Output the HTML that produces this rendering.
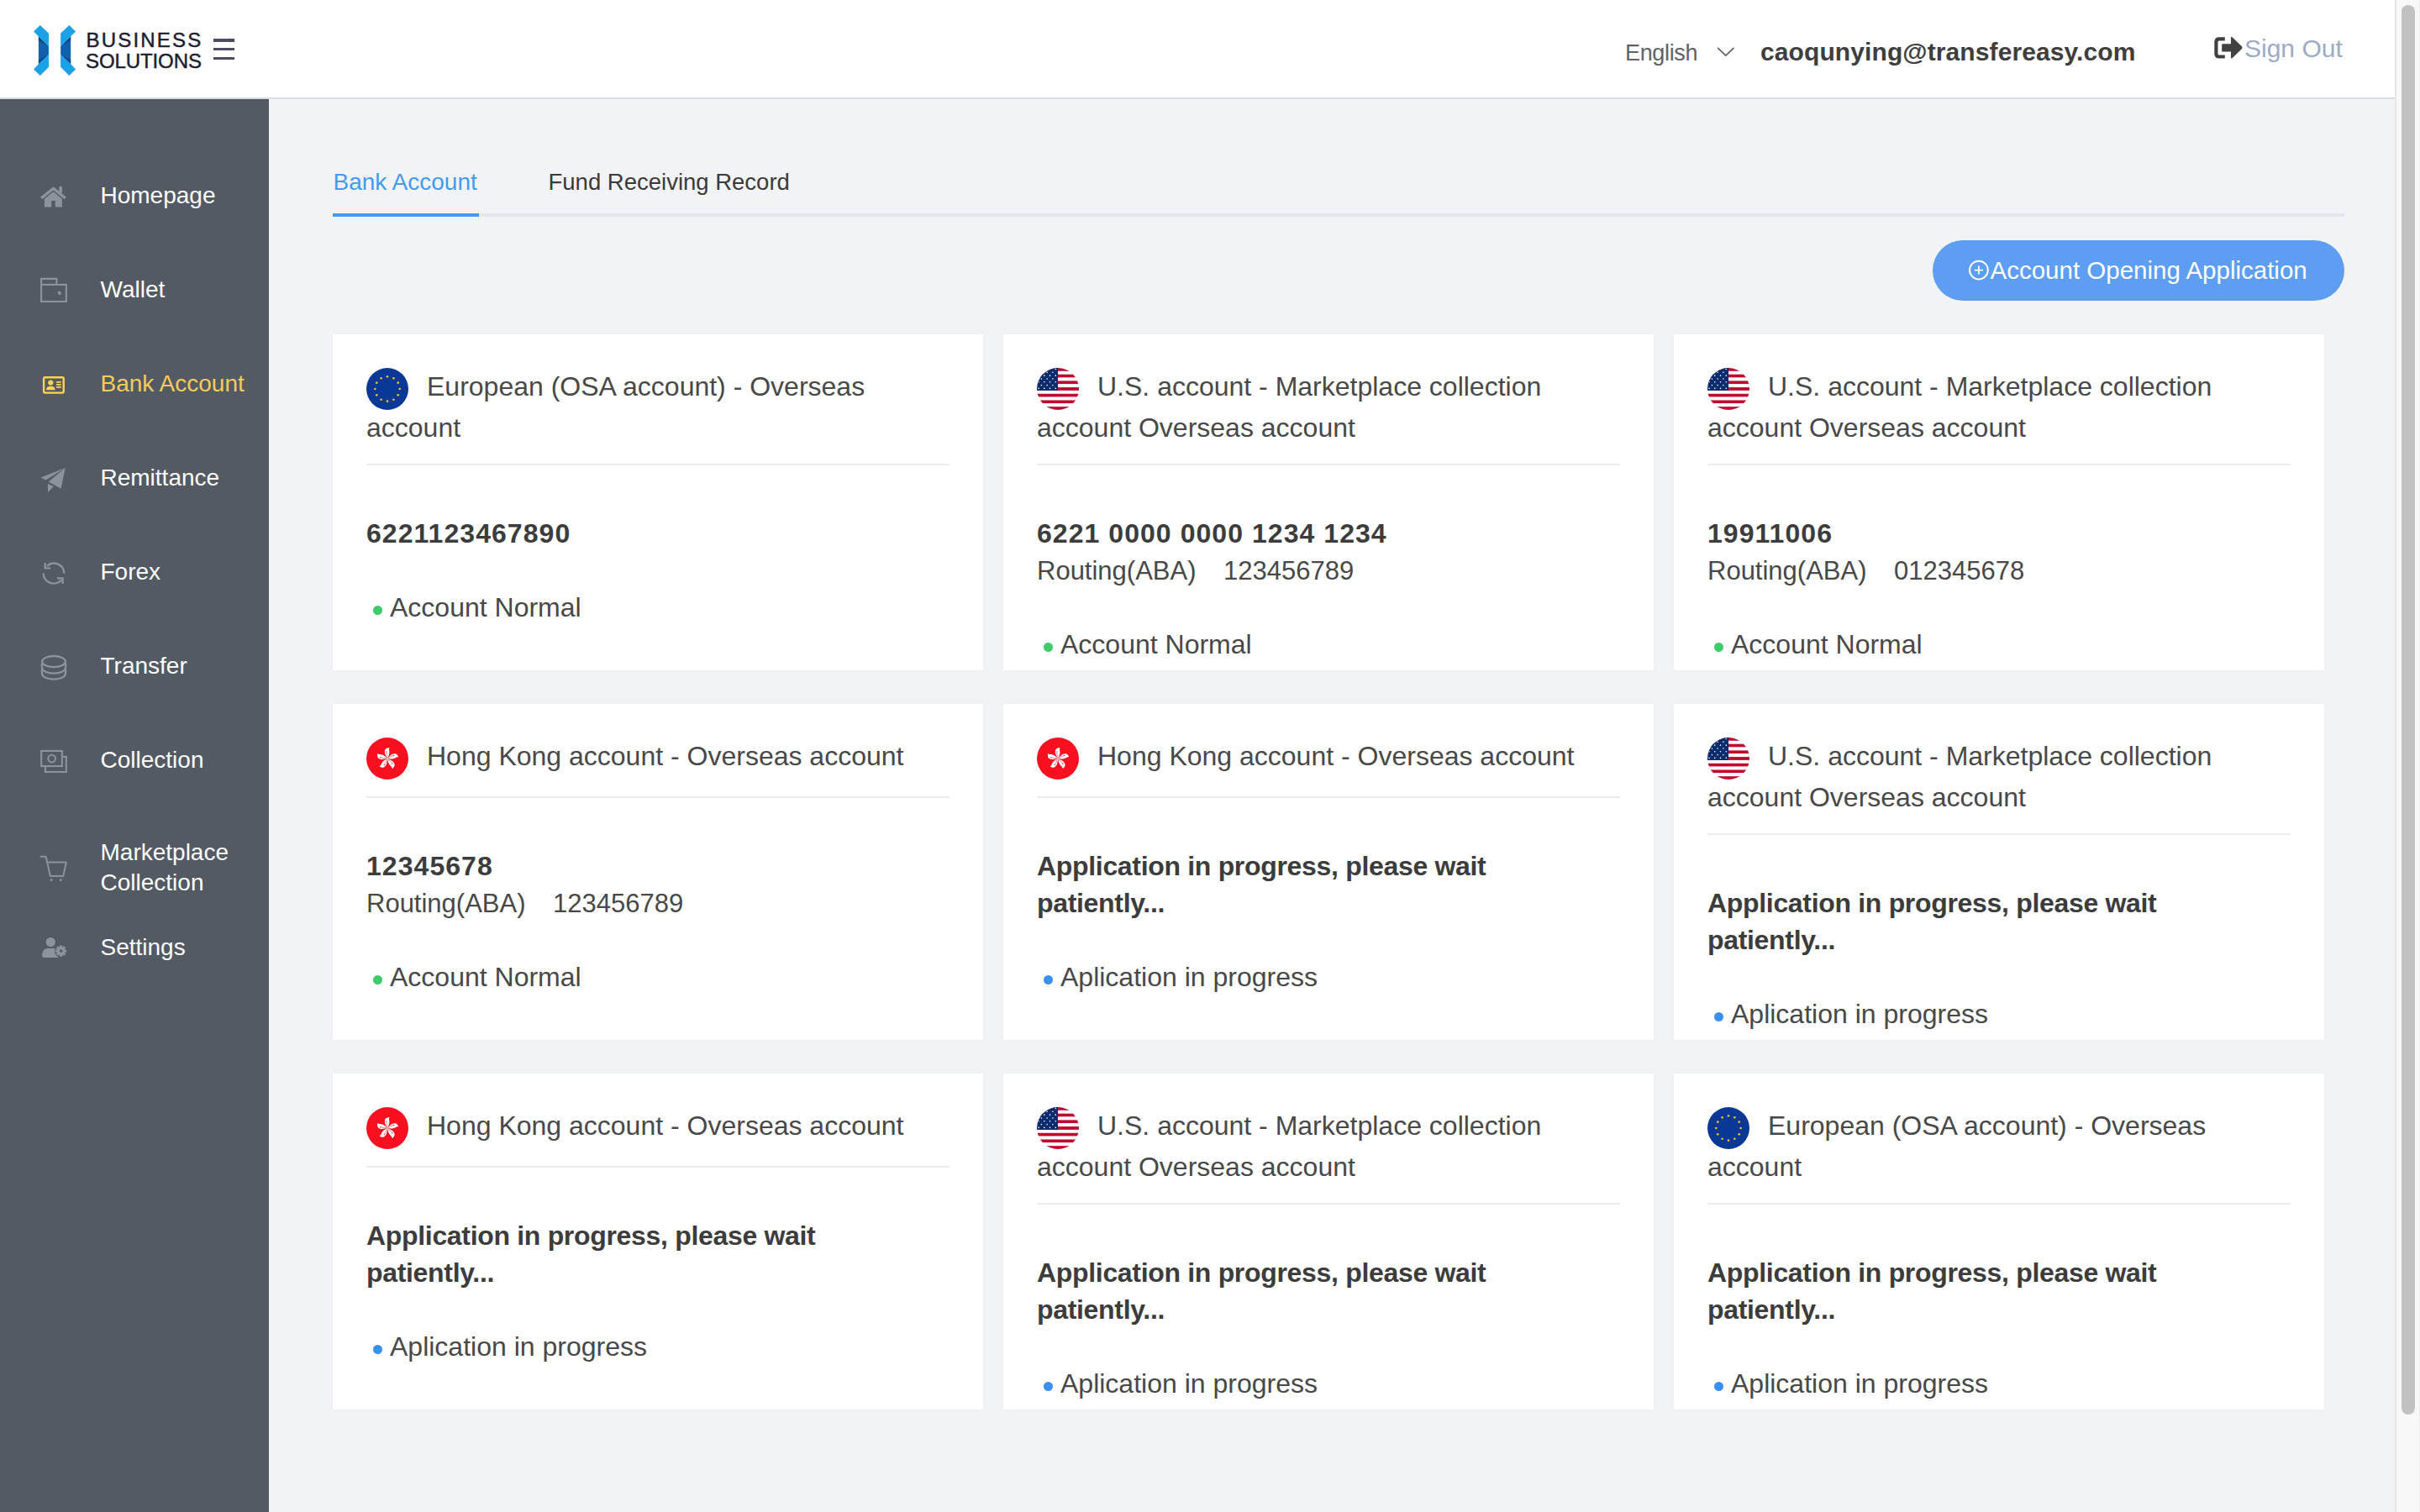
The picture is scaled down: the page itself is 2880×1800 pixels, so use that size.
<!DOCTYPE html>
<html><head><meta charset="utf-8"><title>Bank Account</title>
<style>
html,body{margin:0;padding:0;width:2880px;height:1800px;overflow:hidden;background:#f2f3f7;}
body{position:relative;font-family:"Liberation Sans",sans-serif;}
.abs{position:absolute;}
.t{position:absolute;white-space:nowrap;}
#hdr{position:absolute;left:0;top:0;width:2850px;height:116px;background:#fff;border-bottom:2px solid #d6dde9;}
#side{position:absolute;left:0;top:118px;width:320px;height:1682px;background:#535a63;}
.card{position:absolute;width:774px;height:400px;background:#fff;box-shadow:0 0 6px rgba(0,0,0,0.035);}
</style></head><body>
<div id="hdr"></div>
<svg class="abs" style="left:0;top:0" width="100" height="100" viewBox="0 0 100 100">
<g id="lg">
<polygon points="45.9,43.3 57.95,55.24 57.95,64.69 45.9,76.16" fill="#1160ae"/>
<polygon points="45.9,43.3 45.9,48.2 57.95,55.24" fill="#0b4a88"/>
<polygon points="45.9,76.16 45.9,71.4 57.95,64.69" fill="#0b4a88"/>
<polygon points="40.05,37.47 47.79,29.96 57.95,39.72 57.95,55.24 45.9,43.32" fill="#1ba1e6"/>
<polygon points="40.05,82.46 47.79,89.88 57.95,79.76 57.95,64.69 45.9,76.16" fill="#1ba1e6"/>
</g>
<g transform="translate(130.1,0) scale(-1,1)">
<polygon points="45.9,43.3 57.95,55.24 57.95,64.69 45.9,76.16" fill="#1160ae"/>
<polygon points="45.9,43.3 45.9,48.2 57.95,55.24" fill="#0b4a88"/>
<polygon points="45.9,76.16 45.9,71.4 57.95,64.69" fill="#0b4a88"/>
<polygon points="40.05,37.47 47.79,29.96 57.95,39.72 57.95,55.24 45.9,43.32" fill="#1ba1e6"/>
<polygon points="40.05,82.46 47.79,89.88 57.95,79.76 57.95,64.69 45.9,76.16" fill="#1ba1e6"/>
</g>
</svg>
<div class="t" style="left:102.5px;top:32.68px;font-size:24px;line-height:30px;color:#1d1d2f;font-weight:400;letter-spacing:2.2px;-webkit-text-stroke:0.45px #1d1d2f">BUSINESS</div>
<div class="t" style="left:102px;top:57.68px;font-size:24px;line-height:30px;color:#1d1d2f;font-weight:400;letter-spacing:-0.1px;-webkit-text-stroke:0.45px #1d1d2f">SOLUTIONS</div>
<div class="abs" style="left:253.5px;top:46.4px;width:25px;height:3.2px;background:#4e4a66"></div>
<div class="abs" style="left:253.5px;top:57.2px;width:25px;height:3.2px;background:#4e4a66"></div>
<div class="abs" style="left:253.5px;top:67.8px;width:25px;height:3.2px;background:#4e4a66"></div>
<div class="t" style="left:1934px;top:45.64px;font-size:27px;line-height:34px;color:#606366;font-weight:400;letter-spacing:-0.35px">English</div>
<svg class="abs" style="left:2040px;top:52px" width="28" height="20" viewBox="2040 52 28 20">
<polyline points="2044.6,57.4 2053.8,66.2 2063,57.4" fill="none" stroke="#5e6166" stroke-width="1.7" stroke-linecap="round" stroke-linejoin="round"/></svg>
<div class="t" style="left:2095px;top:43.60px;font-size:30px;line-height:36px;color:#3e3e3e;font-weight:700;letter-spacing:0.1px">caoqunying@transfereasy.com</div>
<svg class="abs" style="left:2630px;top:40px" width="44" height="34" viewBox="2630 40 44 34">
<path d="M2647.8,46.4 H2641 Q2637.4,46.4 2637.4,50 V64 Q2637.4,67.5 2641,67.5 H2647.8" fill="none" stroke="#404040" stroke-width="4.2" stroke-linecap="butt" stroke-linejoin="round"/>
<rect x="2644.2" y="52.3" width="12" height="9.3" rx="1.2" fill="#404040"/>
<path d="M2655.6,45.3 Q2655.2,44.2 2656.4,45 L2667.4,55.8 Q2668.4,56.8 2667.4,57.8 L2656.4,68.6 Q2655.2,69.4 2655.6,68.3 Z" fill="#404040" stroke="#404040" stroke-width="1.2" stroke-linejoin="round"/>
</svg>
<div class="t" style="left:2671px;top:39.60px;font-size:30px;line-height:36px;color:#9eabc4;font-weight:400;">Sign Out</div>
<div class="abs" style="left:2850px;top:0;width:30px;height:1800px;background:#f8f8f8;border-left:2px solid #e6e6e6;border-right:1px solid #eeeeee;box-sizing:border-box"></div>
<div class="abs" style="left:2858px;top:6px;width:16px;height:1678px;background:#c1c1c1;border-radius:8px"></div>
<div id="side"></div>
<div class="t" style="left:119.5px;top:214.90px;font-size:28px;line-height:36px;color:#ffffff;font-weight:400;">Homepage</div>
<div class="t" style="left:119.5px;top:326.90px;font-size:28px;line-height:36px;color:#ffffff;font-weight:400;">Wallet</div>
<div class="t" style="left:119.5px;top:438.90px;font-size:28px;line-height:36px;color:#f5cb5c;font-weight:400;">Bank Account</div>
<div class="t" style="left:119.5px;top:550.90px;font-size:28px;line-height:36px;color:#ffffff;font-weight:400;">Remittance</div>
<div class="t" style="left:119.5px;top:662.90px;font-size:28px;line-height:36px;color:#ffffff;font-weight:400;">Forex</div>
<div class="t" style="left:119.5px;top:774.90px;font-size:28px;line-height:36px;color:#ffffff;font-weight:400;">Transfer</div>
<div class="t" style="left:119.5px;top:886.90px;font-size:28px;line-height:36px;color:#ffffff;font-weight:400;">Collection</div>
<div class="t" style="left:119.5px;top:996.90px;font-size:28px;line-height:36px;color:#ffffff;font-weight:400;">Marketplace</div>
<div class="t" style="left:119.5px;top:1032.90px;font-size:28px;line-height:36px;color:#ffffff;font-weight:400;">Collection</div>
<div class="t" style="left:119.5px;top:1109.90px;font-size:28px;line-height:36px;color:#ffffff;font-weight:400;">Settings</div>
<svg class="abs" style="left:0;top:118px" width="320" height="1100" viewBox="0 118 320 1100">
<!-- home -->
<polygon points="48.1,234.6 63.5,222.2 78.86,234.6 76.7,237.3 63.5,226.6 50.25,237.3" fill="#8e929b"/>
<rect x="70.26" y="222.07" width="3.64" height="7.5" fill="#8e929b"/>
<polygon points="52.9,236.8 63.5,228.35 73.9,236.8 73.9,246.4 65.8,246.4 65.8,239.1 61.2,239.1 61.2,246.4 52.9,246.4" fill="#8e929b"/>
<!-- wallet -->
<rect x="49.1" y="338.9" width="29.75" height="20.1" fill="none" stroke="#8e929b" stroke-width="2.1"/>
<path d="M49.1,338.9 V331.9 H67.4 V338.9" fill="none" stroke="#8e929b" stroke-width="2.1"/>
<circle cx="70.75" cy="348.8" r="2.1" fill="#8e929b"/>
<!-- bank account (active) -->
<rect x="52.1" y="449.2" width="23.6" height="18.4" rx="1.6" fill="none" stroke="#ffd452" stroke-width="2.4"/>
<circle cx="60.3" cy="455.5" r="3.1" fill="#ffd452"/>
<path d="M55,464.2 Q55,459.8 60.3,459.8 Q65.6,459.8 65.6,464.2 Z" fill="#ffd452"/>
<rect x="66.8" y="454" width="6.1" height="1.7" rx="0.8" fill="#ffd452"/>
<rect x="66.8" y="457" width="6.1" height="1.7" rx="0.8" fill="#ffd452"/>
<rect x="66.8" y="460" width="6.1" height="1.7" rx="0.8" fill="#ffd452"/>
<!-- remittance -->
<path d="M48.4,568.5 L77.7,557.1 L54.5,571.6 Z" fill="#8e929b"/>
<path d="M77.7,557.1 L72.6,581.7 L57.7,573.4 Z" fill="#8e929b"/>
<path d="M56.9,575.8 L63.8,579.2 L57,586 Z" fill="#8e929b"/>
<!-- forex -->
<path d="M56.1,673.6 A12.2,12.2 0 0 1 76.3,682.5" fill="none" stroke="#8e929b" stroke-width="2.4"/>
<path d="M51.6,682.5 A12.2,12.2 0 0 0 73.2,690.2" fill="none" stroke="#8e929b" stroke-width="2.4"/>
<path d="M53.7,670 V676.4 H60" fill="none" stroke="#8e929b" stroke-width="2.4"/>
<path d="M68,688.4 H74.6 V695" fill="none" stroke="#8e929b" stroke-width="2.4"/>
<!-- transfer -->
<ellipse cx="64" cy="787.6" rx="13.9" ry="6.6" fill="none" stroke="#8e929b" stroke-width="2.3"/>
<path d="M50.1,789.5 Q49.3,792 50.1,795 A13.9,6.6 0 0 0 77.9,795 Q78.7,792 77.9,789.5" fill="none" stroke="#8e929b" stroke-width="2.3"/>
<path d="M50.1,796.5 Q49.3,799 50.1,802 A13.9,6.6 0 0 0 77.9,802 Q78.7,799 77.9,796.5" fill="none" stroke="#8e929b" stroke-width="2.3"/>
<!-- collection -->
<rect x="49.15" y="893.95" width="24.7" height="18.1" fill="none" stroke="#8e929b" stroke-width="2.1"/>
<path d="M74.9,900.85 H78.8 V918.95 H53.95 V913.1" fill="none" stroke="#8e929b" stroke-width="2.1"/>
<circle cx="61.66" cy="903.1" r="4.4" fill="none" stroke="#8e929b" stroke-width="2.1"/>
<!-- cart -->
<path d="M48.6,1019.8 H54.6 L59.9,1043.1 H75.2 L78.8,1026.6 H56.4" fill="none" stroke="#8e929b" stroke-width="2" stroke-linejoin="round" stroke-linecap="round"/>
<circle cx="61.1" cy="1047.5" r="1.5" fill="#8e929b"/>
<circle cx="72.4" cy="1047.5" r="1.5" fill="#8e929b"/>
<!-- settings -->
<circle cx="60.24" cy="1121.5" r="5.55" fill="#8e929b"/>
<path d="M50.1,1137.5 Q50.1,1129.1 57.5,1129.1 H63.5 Q69.1,1129.1 69.1,1134 V1140 H52.6 Q50.1,1140 50.1,1137.5 Z" fill="#8e929b"/>
<circle cx="72.6" cy="1132.1" r="7.6" fill="#535a63"/>
<g transform="translate(72.6,1132.1)">
<circle r="4.7" fill="#8e929b"/>
<g fill="#8e929b"><rect x="-1.7" y="-6.6" width="3.4" height="13.2" rx="0.5"/><rect x="-1.7" y="-6.6" width="3.4" height="13.2" rx="0.5" transform="rotate(45)"/><rect x="-1.7" y="-6.6" width="3.4" height="13.2" rx="0.5" transform="rotate(90)"/><rect x="-1.7" y="-6.6" width="3.4" height="13.2" rx="0.5" transform="rotate(135)"/></g>
<circle r="1.8" fill="#535a63"/>
</g>
</svg>
<div class="t" style="left:396.5px;top:198.90px;font-size:28px;line-height:36px;color:#409bf6;font-weight:400;">Bank Account</div>
<div class="t" style="left:652.5px;top:199.07px;font-size:27.5px;line-height:36px;color:#3a3a3a;font-weight:400;">Fund Receiving Record</div>
<div class="abs" style="left:396px;top:254px;width:2394px;height:4px;background:#e4e6ee"></div>
<div class="abs" style="left:396px;top:254px;width:174px;height:4px;background:#409bf6"></div>
<div class="abs" style="left:2300px;top:286px;width:490px;height:72px;border-radius:36px;background:#5d9ef2"></div>
<svg class="abs" style="left:2336px;top:302px" width="40" height="40" viewBox="2336 302 40 40">
<circle cx="2354.9" cy="321.6" r="10.9" fill="none" stroke="#fff" stroke-width="2"/>
<path d="M2349.9,321.6 H2359.9 M2354.9,316.5 V326.6" stroke="#fff" stroke-width="1.8"/></svg>
<div class="t" style="left:2368.5px;top:304.18px;font-size:29.5px;line-height:36px;color:#ffffff;font-weight:400;">Account Opening Application</div>
<div class="card" style="left:396px;top:398px"></div>
<svg class="abs" style="left:436px;top:438px" width="50" height="50" viewBox="0 0 50 50"><circle cx="25" cy="25" r="25" fill="#0a3896"/><circle cx="25.00" cy="10.30" r="1.35" fill="#e9bf2e"/><circle cx="32.35" cy="12.27" r="1.35" fill="#e9bf2e"/><circle cx="37.73" cy="17.65" r="1.35" fill="#e9bf2e"/><circle cx="39.70" cy="25.00" r="1.35" fill="#e9bf2e"/><circle cx="37.73" cy="32.35" r="1.35" fill="#e9bf2e"/><circle cx="32.35" cy="37.73" r="1.35" fill="#e9bf2e"/><circle cx="25.00" cy="39.70" r="1.35" fill="#e9bf2e"/><circle cx="17.65" cy="37.73" r="1.35" fill="#e9bf2e"/><circle cx="12.27" cy="32.35" r="1.35" fill="#e9bf2e"/><circle cx="10.30" cy="25.00" r="1.35" fill="#e9bf2e"/><circle cx="12.27" cy="17.65" r="1.35" fill="#e9bf2e"/><circle cx="17.65" cy="12.27" r="1.35" fill="#e9bf2e"/></svg>
<div class="t" style="left:508px;top:440.41px;font-size:32px;line-height:40px;color:#484848;font-weight:400;">European (OSA account) - Overseas</div>
<div class="t" style="left:436px;top:488.91px;font-size:32px;line-height:40px;color:#484848;font-weight:400;">account</div>
<div class="abs" style="left:436px;top:552px;width:694px;height:2px;background:#ebebeb"></div>
<div class="t" style="left:436px;top:615.41px;font-size:32px;line-height:40px;color:#3c3c3c;font-weight:700;letter-spacing:1.05px">6221123467890</div>
<div class="abs" style="left:444.4px;top:721.00px;width:11px;height:11px;border-radius:50%;background:#3ecb6c"></div>
<div class="t" style="left:464px;top:703.41px;font-size:32px;line-height:40px;color:#484848;font-weight:400;">Account Normal</div>
<div class="card" style="left:1194px;top:398px"></div>
<svg class="abs" style="left:1234px;top:438px" width="50" height="50" viewBox="0 0 50 50"><defs><clipPath id="cu"><circle cx="25" cy="25" r="25"/></clipPath></defs><g clip-path="url(#cu)"><rect x="0" y="0.000" width="50" height="3.896" fill="#bf0a30"/><rect x="0" y="3.846" width="50" height="3.896" fill="#ffffff"/><rect x="0" y="7.692" width="50" height="3.896" fill="#bf0a30"/><rect x="0" y="11.538" width="50" height="3.896" fill="#ffffff"/><rect x="0" y="15.385" width="50" height="3.896" fill="#bf0a30"/><rect x="0" y="19.231" width="50" height="3.896" fill="#ffffff"/><rect x="0" y="23.077" width="50" height="3.896" fill="#bf0a30"/><rect x="0" y="26.923" width="50" height="3.896" fill="#ffffff"/><rect x="0" y="30.769" width="50" height="3.896" fill="#bf0a30"/><rect x="0" y="34.615" width="50" height="3.896" fill="#ffffff"/><rect x="0" y="38.462" width="50" height="3.896" fill="#bf0a30"/><rect x="0" y="42.308" width="50" height="3.896" fill="#ffffff"/><rect x="0" y="46.154" width="50" height="3.896" fill="#bf0a30"/><rect x="0" y="0" width="25" height="26.923" fill="#0a2c6e"/><circle cx="2.00" cy="1.50" r="0.8" fill="#fff"/><circle cx="8.75" cy="1.50" r="0.8" fill="#fff"/><circle cx="15.50" cy="1.50" r="0.8" fill="#fff"/><circle cx="22.25" cy="1.50" r="0.8" fill="#fff"/><circle cx="5.40" cy="5.32" r="0.8" fill="#fff"/><circle cx="12.10" cy="5.32" r="0.8" fill="#fff"/><circle cx="18.90" cy="5.32" r="0.8" fill="#fff"/><circle cx="2.00" cy="9.14" r="0.8" fill="#fff"/><circle cx="8.75" cy="9.14" r="0.8" fill="#fff"/><circle cx="15.50" cy="9.14" r="0.8" fill="#fff"/><circle cx="22.25" cy="9.14" r="0.8" fill="#fff"/><circle cx="5.40" cy="12.96" r="0.8" fill="#fff"/><circle cx="12.10" cy="12.96" r="0.8" fill="#fff"/><circle cx="18.90" cy="12.96" r="0.8" fill="#fff"/><circle cx="2.00" cy="16.78" r="0.8" fill="#fff"/><circle cx="8.75" cy="16.78" r="0.8" fill="#fff"/><circle cx="15.50" cy="16.78" r="0.8" fill="#fff"/><circle cx="22.25" cy="16.78" r="0.8" fill="#fff"/><circle cx="5.40" cy="20.60" r="0.8" fill="#fff"/><circle cx="12.10" cy="20.60" r="0.8" fill="#fff"/><circle cx="18.90" cy="20.60" r="0.8" fill="#fff"/><circle cx="2.00" cy="24.42" r="0.8" fill="#fff"/><circle cx="8.75" cy="24.42" r="0.8" fill="#fff"/><circle cx="15.50" cy="24.42" r="0.8" fill="#fff"/><circle cx="22.25" cy="24.42" r="0.8" fill="#fff"/></g></svg>
<div class="t" style="left:1306px;top:440.41px;font-size:32px;line-height:40px;color:#484848;font-weight:400;">U.S. account - Marketplace collection</div>
<div class="t" style="left:1234px;top:488.91px;font-size:32px;line-height:40px;color:#484848;font-weight:400;">account Overseas account</div>
<div class="abs" style="left:1234px;top:552px;width:694px;height:2px;background:#ebebeb"></div>
<div class="t" style="left:1234px;top:615.41px;font-size:32px;line-height:40px;color:#3c3c3c;font-weight:700;letter-spacing:1.05px">6221 0000 0000 1234 1234</div>
<div class="t" style="left:1234px;top:659.76px;font-size:31px;line-height:40px;color:#484848;font-weight:400;">Routing(ABA)</div>
<div class="t" style="left:1456px;top:659.76px;font-size:31px;line-height:40px;color:#484848;font-weight:400;">123456789</div>
<div class="abs" style="left:1242.4px;top:765.00px;width:11px;height:11px;border-radius:50%;background:#3ecb6c"></div>
<div class="t" style="left:1262px;top:747.41px;font-size:32px;line-height:40px;color:#484848;font-weight:400;">Account Normal</div>
<div class="card" style="left:1992px;top:398px"></div>
<svg class="abs" style="left:2032px;top:438px" width="50" height="50" viewBox="0 0 50 50"><defs><clipPath id="cu"><circle cx="25" cy="25" r="25"/></clipPath></defs><g clip-path="url(#cu)"><rect x="0" y="0.000" width="50" height="3.896" fill="#bf0a30"/><rect x="0" y="3.846" width="50" height="3.896" fill="#ffffff"/><rect x="0" y="7.692" width="50" height="3.896" fill="#bf0a30"/><rect x="0" y="11.538" width="50" height="3.896" fill="#ffffff"/><rect x="0" y="15.385" width="50" height="3.896" fill="#bf0a30"/><rect x="0" y="19.231" width="50" height="3.896" fill="#ffffff"/><rect x="0" y="23.077" width="50" height="3.896" fill="#bf0a30"/><rect x="0" y="26.923" width="50" height="3.896" fill="#ffffff"/><rect x="0" y="30.769" width="50" height="3.896" fill="#bf0a30"/><rect x="0" y="34.615" width="50" height="3.896" fill="#ffffff"/><rect x="0" y="38.462" width="50" height="3.896" fill="#bf0a30"/><rect x="0" y="42.308" width="50" height="3.896" fill="#ffffff"/><rect x="0" y="46.154" width="50" height="3.896" fill="#bf0a30"/><rect x="0" y="0" width="25" height="26.923" fill="#0a2c6e"/><circle cx="2.00" cy="1.50" r="0.8" fill="#fff"/><circle cx="8.75" cy="1.50" r="0.8" fill="#fff"/><circle cx="15.50" cy="1.50" r="0.8" fill="#fff"/><circle cx="22.25" cy="1.50" r="0.8" fill="#fff"/><circle cx="5.40" cy="5.32" r="0.8" fill="#fff"/><circle cx="12.10" cy="5.32" r="0.8" fill="#fff"/><circle cx="18.90" cy="5.32" r="0.8" fill="#fff"/><circle cx="2.00" cy="9.14" r="0.8" fill="#fff"/><circle cx="8.75" cy="9.14" r="0.8" fill="#fff"/><circle cx="15.50" cy="9.14" r="0.8" fill="#fff"/><circle cx="22.25" cy="9.14" r="0.8" fill="#fff"/><circle cx="5.40" cy="12.96" r="0.8" fill="#fff"/><circle cx="12.10" cy="12.96" r="0.8" fill="#fff"/><circle cx="18.90" cy="12.96" r="0.8" fill="#fff"/><circle cx="2.00" cy="16.78" r="0.8" fill="#fff"/><circle cx="8.75" cy="16.78" r="0.8" fill="#fff"/><circle cx="15.50" cy="16.78" r="0.8" fill="#fff"/><circle cx="22.25" cy="16.78" r="0.8" fill="#fff"/><circle cx="5.40" cy="20.60" r="0.8" fill="#fff"/><circle cx="12.10" cy="20.60" r="0.8" fill="#fff"/><circle cx="18.90" cy="20.60" r="0.8" fill="#fff"/><circle cx="2.00" cy="24.42" r="0.8" fill="#fff"/><circle cx="8.75" cy="24.42" r="0.8" fill="#fff"/><circle cx="15.50" cy="24.42" r="0.8" fill="#fff"/><circle cx="22.25" cy="24.42" r="0.8" fill="#fff"/></g></svg>
<div class="t" style="left:2104px;top:440.41px;font-size:32px;line-height:40px;color:#484848;font-weight:400;">U.S. account - Marketplace collection</div>
<div class="t" style="left:2032px;top:488.91px;font-size:32px;line-height:40px;color:#484848;font-weight:400;">account Overseas account</div>
<div class="abs" style="left:2032px;top:552px;width:694px;height:2px;background:#ebebeb"></div>
<div class="t" style="left:2032px;top:615.41px;font-size:32px;line-height:40px;color:#3c3c3c;font-weight:700;letter-spacing:1.05px">19911006</div>
<div class="t" style="left:2032px;top:659.76px;font-size:31px;line-height:40px;color:#484848;font-weight:400;">Routing(ABA)</div>
<div class="t" style="left:2254px;top:659.76px;font-size:31px;line-height:40px;color:#484848;font-weight:400;">012345678</div>
<div class="abs" style="left:2040.4px;top:765.00px;width:11px;height:11px;border-radius:50%;background:#3ecb6c"></div>
<div class="t" style="left:2060px;top:747.41px;font-size:32px;line-height:40px;color:#484848;font-weight:400;">Account Normal</div>
<div class="card" style="left:396px;top:838px"></div>
<svg class="abs" style="left:436px;top:878px" width="50" height="50" viewBox="0 0 50 50"><circle cx="25" cy="25" r="25" fill="#f90f1f"/><g transform="translate(25.1,25.1)"><g transform="rotate(0)"><path d="M0,0 C-1.5,-3 -4.6,-6.5 -2.6,-11 C-1.2,-12.8 1.2,-13.2 2.6,-12.8 C1.6,-11.8 1.8,-10.6 2.2,-9.4 C2.8,-6.2 1.6,-3 0,0 Z" fill="#fff"/><path d="M0.2,-1.2 Q-1.6,-4.6 -1.3,-8.2" fill="none" stroke="#f90f1f" stroke-width="0.45"/><circle cx="-1.3" cy="-8.3" r="0.65" fill="#f90f1f"/></g><g transform="rotate(72)"><path d="M0,0 C-1.5,-3 -4.6,-6.5 -2.6,-11 C-1.2,-12.8 1.2,-13.2 2.6,-12.8 C1.6,-11.8 1.8,-10.6 2.2,-9.4 C2.8,-6.2 1.6,-3 0,0 Z" fill="#fff"/><path d="M0.2,-1.2 Q-1.6,-4.6 -1.3,-8.2" fill="none" stroke="#f90f1f" stroke-width="0.45"/><circle cx="-1.3" cy="-8.3" r="0.65" fill="#f90f1f"/></g><g transform="rotate(144)"><path d="M0,0 C-1.5,-3 -4.6,-6.5 -2.6,-11 C-1.2,-12.8 1.2,-13.2 2.6,-12.8 C1.6,-11.8 1.8,-10.6 2.2,-9.4 C2.8,-6.2 1.6,-3 0,0 Z" fill="#fff"/><path d="M0.2,-1.2 Q-1.6,-4.6 -1.3,-8.2" fill="none" stroke="#f90f1f" stroke-width="0.45"/><circle cx="-1.3" cy="-8.3" r="0.65" fill="#f90f1f"/></g><g transform="rotate(216)"><path d="M0,0 C-1.5,-3 -4.6,-6.5 -2.6,-11 C-1.2,-12.8 1.2,-13.2 2.6,-12.8 C1.6,-11.8 1.8,-10.6 2.2,-9.4 C2.8,-6.2 1.6,-3 0,0 Z" fill="#fff"/><path d="M0.2,-1.2 Q-1.6,-4.6 -1.3,-8.2" fill="none" stroke="#f90f1f" stroke-width="0.45"/><circle cx="-1.3" cy="-8.3" r="0.65" fill="#f90f1f"/></g><g transform="rotate(288)"><path d="M0,0 C-1.5,-3 -4.6,-6.5 -2.6,-11 C-1.2,-12.8 1.2,-13.2 2.6,-12.8 C1.6,-11.8 1.8,-10.6 2.2,-9.4 C2.8,-6.2 1.6,-3 0,0 Z" fill="#fff"/><path d="M0.2,-1.2 Q-1.6,-4.6 -1.3,-8.2" fill="none" stroke="#f90f1f" stroke-width="0.45"/><circle cx="-1.3" cy="-8.3" r="0.65" fill="#f90f1f"/></g></g></svg>
<div class="t" style="left:508px;top:880.41px;font-size:32px;line-height:40px;color:#484848;font-weight:400;">Hong Kong account - Overseas account</div>
<div class="abs" style="left:436px;top:948px;width:694px;height:2px;background:#ebebeb"></div>
<div class="t" style="left:436px;top:1011.41px;font-size:32px;line-height:40px;color:#3c3c3c;font-weight:700;letter-spacing:1.05px">12345678</div>
<div class="t" style="left:436px;top:1055.76px;font-size:31px;line-height:40px;color:#484848;font-weight:400;">Routing(ABA)</div>
<div class="t" style="left:658px;top:1055.76px;font-size:31px;line-height:40px;color:#484848;font-weight:400;">123456789</div>
<div class="abs" style="left:444.4px;top:1161.00px;width:11px;height:11px;border-radius:50%;background:#3ecb6c"></div>
<div class="t" style="left:464px;top:1143.41px;font-size:32px;line-height:40px;color:#484848;font-weight:400;">Account Normal</div>
<div class="card" style="left:1194px;top:838px"></div>
<svg class="abs" style="left:1234px;top:878px" width="50" height="50" viewBox="0 0 50 50"><circle cx="25" cy="25" r="25" fill="#f90f1f"/><g transform="translate(25.1,25.1)"><g transform="rotate(0)"><path d="M0,0 C-1.5,-3 -4.6,-6.5 -2.6,-11 C-1.2,-12.8 1.2,-13.2 2.6,-12.8 C1.6,-11.8 1.8,-10.6 2.2,-9.4 C2.8,-6.2 1.6,-3 0,0 Z" fill="#fff"/><path d="M0.2,-1.2 Q-1.6,-4.6 -1.3,-8.2" fill="none" stroke="#f90f1f" stroke-width="0.45"/><circle cx="-1.3" cy="-8.3" r="0.65" fill="#f90f1f"/></g><g transform="rotate(72)"><path d="M0,0 C-1.5,-3 -4.6,-6.5 -2.6,-11 C-1.2,-12.8 1.2,-13.2 2.6,-12.8 C1.6,-11.8 1.8,-10.6 2.2,-9.4 C2.8,-6.2 1.6,-3 0,0 Z" fill="#fff"/><path d="M0.2,-1.2 Q-1.6,-4.6 -1.3,-8.2" fill="none" stroke="#f90f1f" stroke-width="0.45"/><circle cx="-1.3" cy="-8.3" r="0.65" fill="#f90f1f"/></g><g transform="rotate(144)"><path d="M0,0 C-1.5,-3 -4.6,-6.5 -2.6,-11 C-1.2,-12.8 1.2,-13.2 2.6,-12.8 C1.6,-11.8 1.8,-10.6 2.2,-9.4 C2.8,-6.2 1.6,-3 0,0 Z" fill="#fff"/><path d="M0.2,-1.2 Q-1.6,-4.6 -1.3,-8.2" fill="none" stroke="#f90f1f" stroke-width="0.45"/><circle cx="-1.3" cy="-8.3" r="0.65" fill="#f90f1f"/></g><g transform="rotate(216)"><path d="M0,0 C-1.5,-3 -4.6,-6.5 -2.6,-11 C-1.2,-12.8 1.2,-13.2 2.6,-12.8 C1.6,-11.8 1.8,-10.6 2.2,-9.4 C2.8,-6.2 1.6,-3 0,0 Z" fill="#fff"/><path d="M0.2,-1.2 Q-1.6,-4.6 -1.3,-8.2" fill="none" stroke="#f90f1f" stroke-width="0.45"/><circle cx="-1.3" cy="-8.3" r="0.65" fill="#f90f1f"/></g><g transform="rotate(288)"><path d="M0,0 C-1.5,-3 -4.6,-6.5 -2.6,-11 C-1.2,-12.8 1.2,-13.2 2.6,-12.8 C1.6,-11.8 1.8,-10.6 2.2,-9.4 C2.8,-6.2 1.6,-3 0,0 Z" fill="#fff"/><path d="M0.2,-1.2 Q-1.6,-4.6 -1.3,-8.2" fill="none" stroke="#f90f1f" stroke-width="0.45"/><circle cx="-1.3" cy="-8.3" r="0.65" fill="#f90f1f"/></g></g></svg>
<div class="t" style="left:1306px;top:880.41px;font-size:32px;line-height:40px;color:#484848;font-weight:400;">Hong Kong account - Overseas account</div>
<div class="abs" style="left:1234px;top:948px;width:694px;height:2px;background:#ebebeb"></div>
<div class="t" style="left:1234px;top:1011.41px;font-size:32px;line-height:40px;color:#3c3c3c;font-weight:700;letter-spacing:-0.32px">Application in progress, please wait</div>
<div class="t" style="left:1234px;top:1055.41px;font-size:32px;line-height:40px;color:#3c3c3c;font-weight:700;letter-spacing:-0.32px">patiently...</div>
<div class="abs" style="left:1242.4px;top:1161.00px;width:11px;height:11px;border-radius:50%;background:#3b8ff3"></div>
<div class="t" style="left:1262px;top:1143.41px;font-size:32px;line-height:40px;color:#484848;font-weight:400;">Aplication in progress</div>
<div class="card" style="left:1992px;top:838px"></div>
<svg class="abs" style="left:2032px;top:878px" width="50" height="50" viewBox="0 0 50 50"><defs><clipPath id="cu"><circle cx="25" cy="25" r="25"/></clipPath></defs><g clip-path="url(#cu)"><rect x="0" y="0.000" width="50" height="3.896" fill="#bf0a30"/><rect x="0" y="3.846" width="50" height="3.896" fill="#ffffff"/><rect x="0" y="7.692" width="50" height="3.896" fill="#bf0a30"/><rect x="0" y="11.538" width="50" height="3.896" fill="#ffffff"/><rect x="0" y="15.385" width="50" height="3.896" fill="#bf0a30"/><rect x="0" y="19.231" width="50" height="3.896" fill="#ffffff"/><rect x="0" y="23.077" width="50" height="3.896" fill="#bf0a30"/><rect x="0" y="26.923" width="50" height="3.896" fill="#ffffff"/><rect x="0" y="30.769" width="50" height="3.896" fill="#bf0a30"/><rect x="0" y="34.615" width="50" height="3.896" fill="#ffffff"/><rect x="0" y="38.462" width="50" height="3.896" fill="#bf0a30"/><rect x="0" y="42.308" width="50" height="3.896" fill="#ffffff"/><rect x="0" y="46.154" width="50" height="3.896" fill="#bf0a30"/><rect x="0" y="0" width="25" height="26.923" fill="#0a2c6e"/><circle cx="2.00" cy="1.50" r="0.8" fill="#fff"/><circle cx="8.75" cy="1.50" r="0.8" fill="#fff"/><circle cx="15.50" cy="1.50" r="0.8" fill="#fff"/><circle cx="22.25" cy="1.50" r="0.8" fill="#fff"/><circle cx="5.40" cy="5.32" r="0.8" fill="#fff"/><circle cx="12.10" cy="5.32" r="0.8" fill="#fff"/><circle cx="18.90" cy="5.32" r="0.8" fill="#fff"/><circle cx="2.00" cy="9.14" r="0.8" fill="#fff"/><circle cx="8.75" cy="9.14" r="0.8" fill="#fff"/><circle cx="15.50" cy="9.14" r="0.8" fill="#fff"/><circle cx="22.25" cy="9.14" r="0.8" fill="#fff"/><circle cx="5.40" cy="12.96" r="0.8" fill="#fff"/><circle cx="12.10" cy="12.96" r="0.8" fill="#fff"/><circle cx="18.90" cy="12.96" r="0.8" fill="#fff"/><circle cx="2.00" cy="16.78" r="0.8" fill="#fff"/><circle cx="8.75" cy="16.78" r="0.8" fill="#fff"/><circle cx="15.50" cy="16.78" r="0.8" fill="#fff"/><circle cx="22.25" cy="16.78" r="0.8" fill="#fff"/><circle cx="5.40" cy="20.60" r="0.8" fill="#fff"/><circle cx="12.10" cy="20.60" r="0.8" fill="#fff"/><circle cx="18.90" cy="20.60" r="0.8" fill="#fff"/><circle cx="2.00" cy="24.42" r="0.8" fill="#fff"/><circle cx="8.75" cy="24.42" r="0.8" fill="#fff"/><circle cx="15.50" cy="24.42" r="0.8" fill="#fff"/><circle cx="22.25" cy="24.42" r="0.8" fill="#fff"/></g></svg>
<div class="t" style="left:2104px;top:880.41px;font-size:32px;line-height:40px;color:#484848;font-weight:400;">U.S. account - Marketplace collection</div>
<div class="t" style="left:2032px;top:928.91px;font-size:32px;line-height:40px;color:#484848;font-weight:400;">account Overseas account</div>
<div class="abs" style="left:2032px;top:992px;width:694px;height:2px;background:#ebebeb"></div>
<div class="t" style="left:2032px;top:1055.41px;font-size:32px;line-height:40px;color:#3c3c3c;font-weight:700;letter-spacing:-0.32px">Application in progress, please wait</div>
<div class="t" style="left:2032px;top:1099.41px;font-size:32px;line-height:40px;color:#3c3c3c;font-weight:700;letter-spacing:-0.32px">patiently...</div>
<div class="abs" style="left:2040.4px;top:1205.00px;width:11px;height:11px;border-radius:50%;background:#3b8ff3"></div>
<div class="t" style="left:2060px;top:1187.41px;font-size:32px;line-height:40px;color:#484848;font-weight:400;">Aplication in progress</div>
<div class="card" style="left:396px;top:1278px"></div>
<svg class="abs" style="left:436px;top:1318px" width="50" height="50" viewBox="0 0 50 50"><circle cx="25" cy="25" r="25" fill="#f90f1f"/><g transform="translate(25.1,25.1)"><g transform="rotate(0)"><path d="M0,0 C-1.5,-3 -4.6,-6.5 -2.6,-11 C-1.2,-12.8 1.2,-13.2 2.6,-12.8 C1.6,-11.8 1.8,-10.6 2.2,-9.4 C2.8,-6.2 1.6,-3 0,0 Z" fill="#fff"/><path d="M0.2,-1.2 Q-1.6,-4.6 -1.3,-8.2" fill="none" stroke="#f90f1f" stroke-width="0.45"/><circle cx="-1.3" cy="-8.3" r="0.65" fill="#f90f1f"/></g><g transform="rotate(72)"><path d="M0,0 C-1.5,-3 -4.6,-6.5 -2.6,-11 C-1.2,-12.8 1.2,-13.2 2.6,-12.8 C1.6,-11.8 1.8,-10.6 2.2,-9.4 C2.8,-6.2 1.6,-3 0,0 Z" fill="#fff"/><path d="M0.2,-1.2 Q-1.6,-4.6 -1.3,-8.2" fill="none" stroke="#f90f1f" stroke-width="0.45"/><circle cx="-1.3" cy="-8.3" r="0.65" fill="#f90f1f"/></g><g transform="rotate(144)"><path d="M0,0 C-1.5,-3 -4.6,-6.5 -2.6,-11 C-1.2,-12.8 1.2,-13.2 2.6,-12.8 C1.6,-11.8 1.8,-10.6 2.2,-9.4 C2.8,-6.2 1.6,-3 0,0 Z" fill="#fff"/><path d="M0.2,-1.2 Q-1.6,-4.6 -1.3,-8.2" fill="none" stroke="#f90f1f" stroke-width="0.45"/><circle cx="-1.3" cy="-8.3" r="0.65" fill="#f90f1f"/></g><g transform="rotate(216)"><path d="M0,0 C-1.5,-3 -4.6,-6.5 -2.6,-11 C-1.2,-12.8 1.2,-13.2 2.6,-12.8 C1.6,-11.8 1.8,-10.6 2.2,-9.4 C2.8,-6.2 1.6,-3 0,0 Z" fill="#fff"/><path d="M0.2,-1.2 Q-1.6,-4.6 -1.3,-8.2" fill="none" stroke="#f90f1f" stroke-width="0.45"/><circle cx="-1.3" cy="-8.3" r="0.65" fill="#f90f1f"/></g><g transform="rotate(288)"><path d="M0,0 C-1.5,-3 -4.6,-6.5 -2.6,-11 C-1.2,-12.8 1.2,-13.2 2.6,-12.8 C1.6,-11.8 1.8,-10.6 2.2,-9.4 C2.8,-6.2 1.6,-3 0,0 Z" fill="#fff"/><path d="M0.2,-1.2 Q-1.6,-4.6 -1.3,-8.2" fill="none" stroke="#f90f1f" stroke-width="0.45"/><circle cx="-1.3" cy="-8.3" r="0.65" fill="#f90f1f"/></g></g></svg>
<div class="t" style="left:508px;top:1320.41px;font-size:32px;line-height:40px;color:#484848;font-weight:400;">Hong Kong account - Overseas account</div>
<div class="abs" style="left:436px;top:1388px;width:694px;height:2px;background:#ebebeb"></div>
<div class="t" style="left:436px;top:1451.41px;font-size:32px;line-height:40px;color:#3c3c3c;font-weight:700;letter-spacing:-0.32px">Application in progress, please wait</div>
<div class="t" style="left:436px;top:1495.41px;font-size:32px;line-height:40px;color:#3c3c3c;font-weight:700;letter-spacing:-0.32px">patiently...</div>
<div class="abs" style="left:444.4px;top:1601.00px;width:11px;height:11px;border-radius:50%;background:#3b8ff3"></div>
<div class="t" style="left:464px;top:1583.41px;font-size:32px;line-height:40px;color:#484848;font-weight:400;">Aplication in progress</div>
<div class="card" style="left:1194px;top:1278px"></div>
<svg class="abs" style="left:1234px;top:1318px" width="50" height="50" viewBox="0 0 50 50"><defs><clipPath id="cu"><circle cx="25" cy="25" r="25"/></clipPath></defs><g clip-path="url(#cu)"><rect x="0" y="0.000" width="50" height="3.896" fill="#bf0a30"/><rect x="0" y="3.846" width="50" height="3.896" fill="#ffffff"/><rect x="0" y="7.692" width="50" height="3.896" fill="#bf0a30"/><rect x="0" y="11.538" width="50" height="3.896" fill="#ffffff"/><rect x="0" y="15.385" width="50" height="3.896" fill="#bf0a30"/><rect x="0" y="19.231" width="50" height="3.896" fill="#ffffff"/><rect x="0" y="23.077" width="50" height="3.896" fill="#bf0a30"/><rect x="0" y="26.923" width="50" height="3.896" fill="#ffffff"/><rect x="0" y="30.769" width="50" height="3.896" fill="#bf0a30"/><rect x="0" y="34.615" width="50" height="3.896" fill="#ffffff"/><rect x="0" y="38.462" width="50" height="3.896" fill="#bf0a30"/><rect x="0" y="42.308" width="50" height="3.896" fill="#ffffff"/><rect x="0" y="46.154" width="50" height="3.896" fill="#bf0a30"/><rect x="0" y="0" width="25" height="26.923" fill="#0a2c6e"/><circle cx="2.00" cy="1.50" r="0.8" fill="#fff"/><circle cx="8.75" cy="1.50" r="0.8" fill="#fff"/><circle cx="15.50" cy="1.50" r="0.8" fill="#fff"/><circle cx="22.25" cy="1.50" r="0.8" fill="#fff"/><circle cx="5.40" cy="5.32" r="0.8" fill="#fff"/><circle cx="12.10" cy="5.32" r="0.8" fill="#fff"/><circle cx="18.90" cy="5.32" r="0.8" fill="#fff"/><circle cx="2.00" cy="9.14" r="0.8" fill="#fff"/><circle cx="8.75" cy="9.14" r="0.8" fill="#fff"/><circle cx="15.50" cy="9.14" r="0.8" fill="#fff"/><circle cx="22.25" cy="9.14" r="0.8" fill="#fff"/><circle cx="5.40" cy="12.96" r="0.8" fill="#fff"/><circle cx="12.10" cy="12.96" r="0.8" fill="#fff"/><circle cx="18.90" cy="12.96" r="0.8" fill="#fff"/><circle cx="2.00" cy="16.78" r="0.8" fill="#fff"/><circle cx="8.75" cy="16.78" r="0.8" fill="#fff"/><circle cx="15.50" cy="16.78" r="0.8" fill="#fff"/><circle cx="22.25" cy="16.78" r="0.8" fill="#fff"/><circle cx="5.40" cy="20.60" r="0.8" fill="#fff"/><circle cx="12.10" cy="20.60" r="0.8" fill="#fff"/><circle cx="18.90" cy="20.60" r="0.8" fill="#fff"/><circle cx="2.00" cy="24.42" r="0.8" fill="#fff"/><circle cx="8.75" cy="24.42" r="0.8" fill="#fff"/><circle cx="15.50" cy="24.42" r="0.8" fill="#fff"/><circle cx="22.25" cy="24.42" r="0.8" fill="#fff"/></g></svg>
<div class="t" style="left:1306px;top:1320.41px;font-size:32px;line-height:40px;color:#484848;font-weight:400;">U.S. account - Marketplace collection</div>
<div class="t" style="left:1234px;top:1368.91px;font-size:32px;line-height:40px;color:#484848;font-weight:400;">account Overseas account</div>
<div class="abs" style="left:1234px;top:1432px;width:694px;height:2px;background:#ebebeb"></div>
<div class="t" style="left:1234px;top:1495.41px;font-size:32px;line-height:40px;color:#3c3c3c;font-weight:700;letter-spacing:-0.32px">Application in progress, please wait</div>
<div class="t" style="left:1234px;top:1539.41px;font-size:32px;line-height:40px;color:#3c3c3c;font-weight:700;letter-spacing:-0.32px">patiently...</div>
<div class="abs" style="left:1242.4px;top:1645.00px;width:11px;height:11px;border-radius:50%;background:#3b8ff3"></div>
<div class="t" style="left:1262px;top:1627.41px;font-size:32px;line-height:40px;color:#484848;font-weight:400;">Aplication in progress</div>
<div class="card" style="left:1992px;top:1278px"></div>
<svg class="abs" style="left:2032px;top:1318px" width="50" height="50" viewBox="0 0 50 50"><circle cx="25" cy="25" r="25" fill="#0a3896"/><circle cx="25.00" cy="10.30" r="1.35" fill="#e9bf2e"/><circle cx="32.35" cy="12.27" r="1.35" fill="#e9bf2e"/><circle cx="37.73" cy="17.65" r="1.35" fill="#e9bf2e"/><circle cx="39.70" cy="25.00" r="1.35" fill="#e9bf2e"/><circle cx="37.73" cy="32.35" r="1.35" fill="#e9bf2e"/><circle cx="32.35" cy="37.73" r="1.35" fill="#e9bf2e"/><circle cx="25.00" cy="39.70" r="1.35" fill="#e9bf2e"/><circle cx="17.65" cy="37.73" r="1.35" fill="#e9bf2e"/><circle cx="12.27" cy="32.35" r="1.35" fill="#e9bf2e"/><circle cx="10.30" cy="25.00" r="1.35" fill="#e9bf2e"/><circle cx="12.27" cy="17.65" r="1.35" fill="#e9bf2e"/><circle cx="17.65" cy="12.27" r="1.35" fill="#e9bf2e"/></svg>
<div class="t" style="left:2104px;top:1320.41px;font-size:32px;line-height:40px;color:#484848;font-weight:400;">European (OSA account) - Overseas</div>
<div class="t" style="left:2032px;top:1368.91px;font-size:32px;line-height:40px;color:#484848;font-weight:400;">account</div>
<div class="abs" style="left:2032px;top:1432px;width:694px;height:2px;background:#ebebeb"></div>
<div class="t" style="left:2032px;top:1495.41px;font-size:32px;line-height:40px;color:#3c3c3c;font-weight:700;letter-spacing:-0.32px">Application in progress, please wait</div>
<div class="t" style="left:2032px;top:1539.41px;font-size:32px;line-height:40px;color:#3c3c3c;font-weight:700;letter-spacing:-0.32px">patiently...</div>
<div class="abs" style="left:2040.4px;top:1645.00px;width:11px;height:11px;border-radius:50%;background:#3b8ff3"></div>
<div class="t" style="left:2060px;top:1627.41px;font-size:32px;line-height:40px;color:#484848;font-weight:400;">Aplication in progress</div>
<script>(function(){var w=window.innerWidth;if(w&&Math.abs(w-2880)>2){document.documentElement.style.zoom=(w/2880);}})();</script>
</body></html>
